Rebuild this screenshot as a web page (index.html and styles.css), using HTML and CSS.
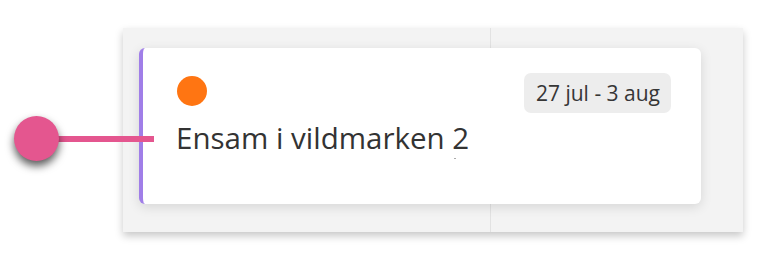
FILE: index.html
```html
<!DOCTYPE html>
<html lang="sv">
<head>
<meta charset="utf-8">
<title>Tidslinje</title>
<link rel="stylesheet" href="styles.css">
</head>
<body>
<div class="stage">
  <div class="lane">
    <div class="col col-a"></div>
    <div class="col col-b"></div>
    <div class="card">
      <div class="card-head">
        <span class="dot"></span>
        <span class="badge">27 jul - 3 aug</span>
      </div>
      <div class="title">Ensam i vildmarken 2</div>
      <span class="tick"></span>
    </div>
  </div>
  <span class="connector"></span>
  <span class="pin"></span>
</div>
</body>
</html>
```

FILE: styles.css
```css
html, body {
  margin: 0;
  padding: 0;
  background: #ffffff;
}
body {
  font-family: "Open Sans", "Noto Sans", "Liberation Sans", sans-serif;
  color: #333333;
}
.stage {
  position: relative;
  width: 774px;
  height: 266px;
  padding: 28px 0 0 123px;
  box-sizing: border-box;
}
.lane {
  width: 620px;
  height: 204px;
  display: grid;
  grid-template-columns: 368px 1fr;
  grid-template-rows: 1fr;
  background: #f3f3f3;
  box-shadow: 0 4px 8px rgba(0, 0, 0, 0.22);
}
.col {
  grid-row: 1;
}
.col-a {
  grid-column: 1;
  border-right: 1px solid #e2e2e2;
}
.col-b {
  grid-column: 2;
}
.card {
  grid-row: 1;
  grid-column: 1 / span 2;
  position: relative;
  z-index: 1;
  margin: 20px 42px 28px 16px;
  background: #ffffff;
  border-left: 4px solid #a07ee8;
  border-radius: 6px;
  box-shadow: 0 3px 12px rgba(0, 0, 0, 0.12);
  padding: 25px 30px 0 34px;
  box-sizing: border-box;
}
.card-head {
  display: flex;
  justify-content: space-between;
  align-items: flex-start;
}
.dot {
  width: 30px;
  height: 30px;
  margin-top: 3px;
  border-radius: 50%;
  background: #ff7512;
}
.badge {
  height: 40px;
  box-sizing: border-box;
  padding: 0 11px 0 12px;
  display: flex;
  align-items: center;
  background: #ededed;
  border-radius: 7px;
  font-size: 21px;
  color: #363636;
}
.title {
  margin-top: 5px;
  font-size: 29.5px;
  line-height: 40px;
  color: #333333;
  margin-left: -1px;
}
.tick {
  position: absolute;
  left: 311px;
  top: 110px;
  width: 2px;
  height: 1px;
  background: #aaaaaa;
}
.connector {
  position: absolute;
  left: 50px;
  top: 136px;
  width: 104px;
  height: 6px;
  background: #e4568f;
  z-index: 2;
}
.pin {
  position: absolute;
  left: 14px;
  top: 116px;
  width: 45px;
  height: 45px;
  border-radius: 50%;
  background: #e4568f;
  box-shadow: 0 5px 8px rgba(0, 0, 0, 0.65);
  z-index: 3;
}
```
